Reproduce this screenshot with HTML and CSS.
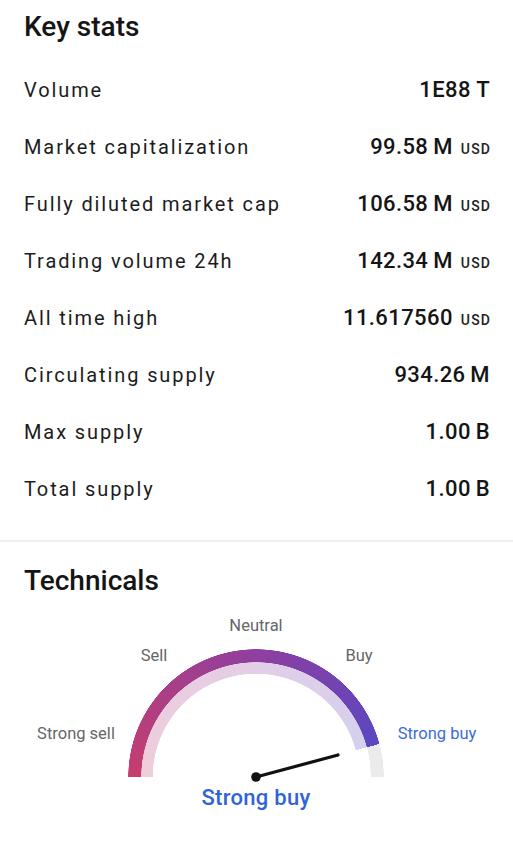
FILE: index.html
```html
<!DOCTYPE html>
<html lang="en">
  <head>
    <meta charset="UTF-8" />
    <meta name="viewport" content="width=device-width, initial-scale=1.0" />
    <title>Key stats</title>
    <link rel="stylesheet" href="styles.css">
  </head>
  <body>
    <section class="stats">
      <h2 class="title">Key stats</h2>
      <div class="row"><span class="label">Volume</span><span class="value">1E88 T</span></div>
      <div class="row"><span class="label">Market capitalization</span><span class="value">99.58&#8201;M<small>USD</small></span></div>
      <div class="row"><span class="label">Fully diluted market cap</span><span class="value">106.58&#8201;M<small>USD</small></span></div>
      <div class="row"><span class="label">Trading volume 24h</span><span class="value">142.34&#8201;M<small>USD</small></span></div>
      <div class="row"><span class="label">All time high</span><span class="value">11.617560<small>USD</small></span></div>
      <div class="row"><span class="label">Circulating supply</span><span class="value">934.26&#8201;M</span></div>
      <div class="row"><span class="label">Max supply</span><span class="value">1.00&#8201;B</span></div>
      <div class="row"><span class="label">Total supply</span><span class="value">1.00&#8201;B</span></div>
    </section>
    <section class="technicals">
      <h2 class="title">Technicals</h2>
      <div class="gauge">
        <div class="ring ring-outer"></div>
        <div class="ring ring-inner"></div>
        <svg class="needle" width="513" height="230" viewBox="0 0 513 230">
          <line x1="256" y1="169" x2="338" y2="147" stroke="#111" stroke-width="3.2" stroke-linecap="round" />
          <circle cx="256" cy="169" r="4.8" fill="#111" />
        </svg>
        <span class="mark neutral">Neutral</span>
        <span class="mark sell">Sell</span>
        <span class="mark buy">Buy</span>
        <span class="mark strong-sell">Strong sell</span>
        <span class="mark strong-buy">Strong buy</span>
        <span class="verdict">Strong buy</span>
      </div>
    </section>
  </body>
</html>
```

FILE: styles.css
```css
body {
  margin: 0;
  background: #fff;
  color: #151515;
  font-family: Roboto, "Noto Sans", sans-serif;
}
.title {
  margin: 0;
  font-size: 28px;
  font-weight: 500;
  line-height: 54px;
  padding: 0 24px;
}
.stats {
  padding-bottom: 23px;
  border-bottom: 2px solid #efefef;
}
.stats .title {
  margin-bottom: 7px;
}
.row {
  display: flex;
  justify-content: space-between;
  align-items: center;
  height: 57px;
  padding: 0 23px 0 24px;
}
.label {
  font-size: 20px;
  letter-spacing: 1.9px;
  color: #1c1c1c;
  white-space: nowrap;
}
.value {
  flex-shrink: 0;
  white-space: nowrap;
  font-size: 22px;
  font-weight: 500;
  letter-spacing: 0.4px;
  color: #151515;
}
.value small {
  font-size: 14px;
  letter-spacing: 1.2px;
  margin-left: 8px;
  margin-right: -1.2px;
  color: #222;
}
.technicals .title {
  margin-top: 12px;
}
.gauge {
  position: relative;
  height: 233px;
}
.ring {
  position: absolute;
  left: 128px;
  top: 41px;
  width: 256px;
  height: 128px;
}
.ring-outer {
  background: conic-gradient(from 270deg at 50% 100%, #c53e6f 0deg, #8f3f9f 90deg, #5a47c1 165deg, #ebebeb 165deg 180deg, transparent 180deg);
  -webkit-mask: radial-gradient(circle at 50% 100%, transparent 114.5px, #000 115px, #000 127.5px, transparent 128px);
  mask: radial-gradient(circle at 50% 100%, transparent 114.5px, #000 115px, #000 127.5px, transparent 128px);
}
.ring-inner {
  background: conic-gradient(from 270deg at 50% 100%, #c53e6f 0deg, #8f3f9f 90deg, #5a47c1 165deg, transparent 165deg);
  opacity: 0.25;
  -webkit-mask: radial-gradient(circle at 50% 100%, transparent 103px, #000 103.5px, #000 114.5px, transparent 115px);
  mask: radial-gradient(circle at 50% 100%, transparent 103px, #000 103.5px, #000 114.5px, transparent 115px);
}
.needle {
  position: absolute;
  left: 0;
  top: 0;
}
.mark {
  position: absolute;
  font-size: 16.5px;
  line-height: 20px;
  color: #666;
  transform: translate(-50%, -50%);
  white-space: nowrap;
}
.neutral { left: 256px; top: 18px; }
.sell { left: 154px; top: 48px; }
.buy { left: 359px; top: 48px; }
.strong-sell { left: 76px; top: 126px; }
.strong-buy { left: 437px; top: 126px; color: #3c6bd6; }
.verdict {
  position: absolute;
  left: 256px;
  top: 189px;
  transform: translate(-50%, -50%);
  font-size: 22px;
  font-weight: 500;
  letter-spacing: 0.3px;
  color: #3063da;
  white-space: nowrap;
}
```
